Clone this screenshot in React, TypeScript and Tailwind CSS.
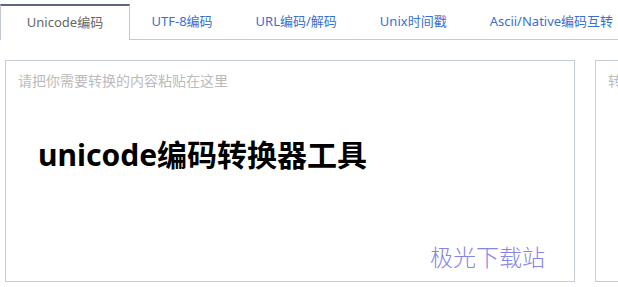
const tabs = ['Unicode编码', 'UTF-8编码', 'URL编码/解码', 'Unix时间戳', 'Ascii/Native编码互转']

export default function App() {
  return (
    <div
      className="w-[618px] h-[287px] overflow-hidden bg-white"
      style={{ fontFamily: '"Noto Sans", "Noto Sans CJK SC", sans-serif' }}
    >
      <div className="pt-[4px] flex border-b border-[#c3cad6] h-[40px] whitespace-nowrap">
        {tabs.map((t, i) =>
          i === 0 ? (
            <div
              key={t}
              className="w-[130px] shrink-0 h-[36px] -mb-px bg-white border-t-2 border-t-[#5b6780] border-x border-x-[#c3cad6] flex items-center justify-center text-[13px] text-[#666]"
            >
              {t}
            </div>
          ) : (
            <div key={t} className="shrink-0 px-[21.5px] h-[36px] flex items-center text-[13px] text-[#3a6fd2]">
              {t}
            </div>
          )
        )}
      </div>
      <div className="flex gap-[20px] pl-[5px] pt-[20px]">
        <div className="relative w-[570px] h-[222px] shrink-0 border border-[#c5cdd9]">
          <div className="pl-[12px] pt-[12px] text-[14px] leading-[16px] text-[#bbbbbb]">请把你需要转换的内容粘贴在这里</div>
          <div className="pl-[32px] pt-[47px] text-[30px] leading-[38px] font-bold text-black">
            unicode编码转换器工具
          </div>
          <div className="absolute right-[29px] bottom-[10px] text-[23px] leading-[28px] font-light text-[#8686ea]">
            极光下载站
          </div>
        </div>
        <div className="w-[40px] h-[222px] shrink-0 border border-[#c5cdd9]">
          <div className="pl-[12px] pt-[12px] text-[14px] leading-[16px] text-[#bbbbbb] whitespace-nowrap">转换结果</div>
        </div>
      </div>
    </div>
  )
}
